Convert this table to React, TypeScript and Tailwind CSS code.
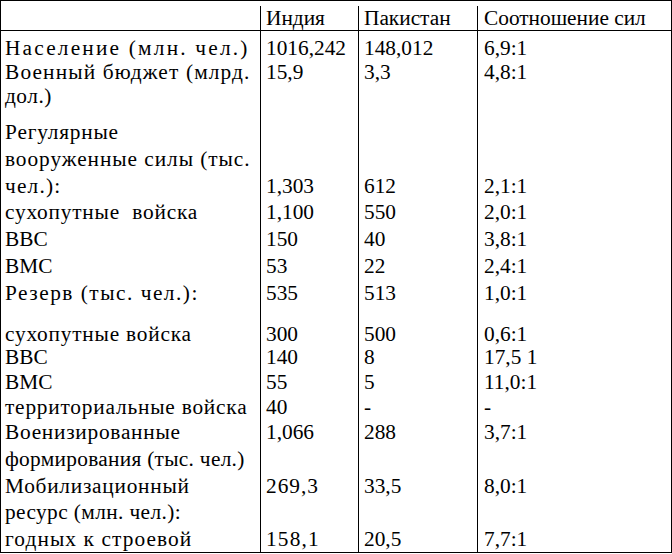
import React from "react";

type Row = { h: string; t?: string; c: [string, string, string, string]; t2?: string };

const rows: Row[] = [
  { h: "h-[24px]", t: "tracking-[2.2px]", c: ["Население (млн. чел.)", "1016,242", "148,012", "6,9:1"] },
  { h: "h-[24px]", t: "tracking-[1.15px]", c: ["Военный бюджет (млрд.", "15,9", "3,3", "4,8:1"] },
  { h: "h-[36px]", t: "tracking-[0.5px]", c: ["дол.)", "", "", ""] },
  { h: "h-[27px]", t: "tracking-[0.8px]", c: ["Регулярные", "", "", ""] },
  { h: "h-[27px]", t: "tracking-[0.95px]", c: ["вооруженные силы (тыс.", "", "", ""] },
  { h: "h-[26px]", t: "tracking-[1.2px]", c: ["чел.):", "1,303", "612", "2,1:1"] },
  { h: "h-[27px]", t: "tracking-[0.8px]", c: ["сухопутные\u00a0 войска", "1,100", "550", "2,0:1"] },
  { h: "h-[27px]", c: ["ВВС", "150", "40", "3,8:1"] },
  { h: "h-[27px]", c: ["ВМС", "53", "22", "2,4:1"] },
  { h: "h-[41px]", t: "tracking-[1.5px]", c: ["Резерв (тыс. чел.):", "535", "513", "1,0:1"] },
  { h: "h-[23px]", t: "tracking-[0.8px]", c: ["сухопутные войска", "300", "500", "0,6:1"] },
  { h: "h-[25px]", c: ["ВВС", "140", "8", "17,5 1"] },
  { h: "h-[25px]", c: ["ВМС", "55", "5", "11,0:1"] },
  { h: "h-[25px]", t: "tracking-[0.8px]", c: ["территориальные войска", "40", "-", "-"] },
  { h: "h-[27px]", t: "tracking-[0.75px]", c: ["Военизированные", "1,066", "288", "3,7:1"] },
  { h: "h-[27px]", t: "tracking-[0.3px]", c: ["формирования (тыс. чел.)", "", "", ""] },
  { h: "h-[26px]", t: "tracking-[0.75px]", t2: "tracking-[1px]", c: ["Мобилизационный", "269,3", "33,5", "8,0:1"] },
  { h: "h-[27px]", t: "tracking-[0.4px]", c: ["ресурс (млн. чел.):", "", "", ""] },
  { h: "flex-1", t: "tracking-[1.1px]", t2: "tracking-[1.2px]", c: ["годных к строевой", "158,1", "20,5", "7,7:1"] },
];

function Cells({ c, t = "", t2 = "" }: { c: [string, string, string, string]; t?: string; t2?: string }) {
  return (
    <>
      <div className={`w-[260px] shrink-0 border-r border-black pl-[4px] whitespace-nowrap ${t}`}>{c[0]}</div>
      <div className={`w-[98px] shrink-0 border-r border-black pl-[5px] whitespace-nowrap ${t2}`}>{c[1]}</div>
      <div className="w-[119px] shrink-0 border-r border-black pl-[5px] whitespace-nowrap">{c[2]}</div>
      <div className="flex-1 pl-[6px] whitespace-nowrap">{c[3]}</div>
    </>
  );
}

export default function App() {
  return (
    <div className="w-[672px] h-[554px] bg-white">
      <div className="w-[672px] h-[553px] border border-black flex flex-col text-black text-[21.33px] leading-[24px] font-['Liberation_Serif','Times_New_Roman',serif]">
        <div className="flex h-[30px] shrink-0 border-b border-black pt-[5px]">
          <Cells c={["", "Индия", "Пакистан", "Соотношение сил"]} />
        </div>
        <div className="flex h-[5px] shrink-0">
          <Cells c={["", "", "", ""]} />
        </div>
        {rows.map((r, i) => (
          <div key={i} className={`flex shrink-0 ${r.h}`}>
            <Cells c={r.c} t={r.t} t2={r.t2} />
          </div>
        ))}
      </div>
    </div>
  );
}
